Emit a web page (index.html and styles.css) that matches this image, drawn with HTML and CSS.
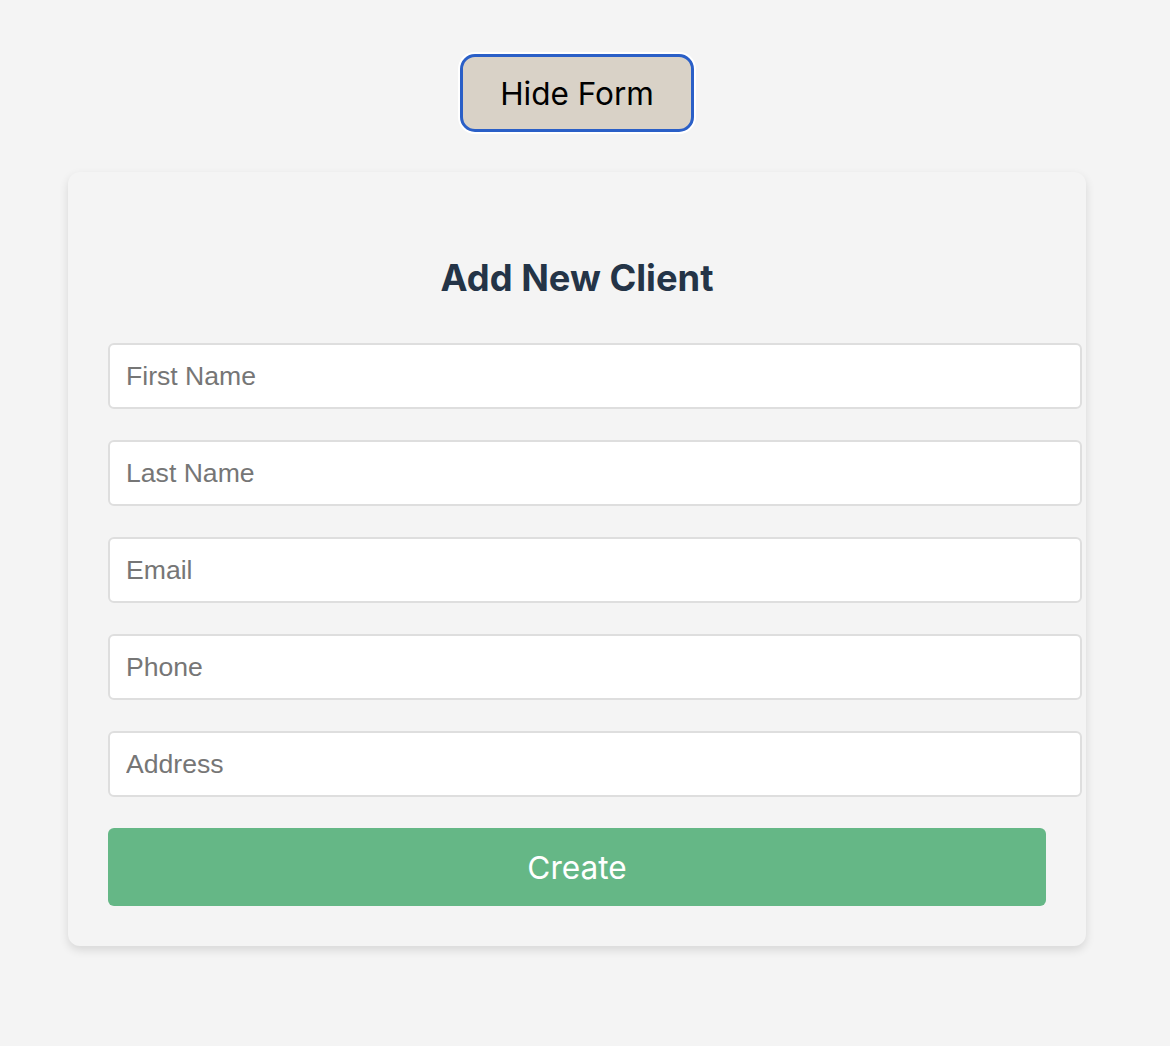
FILE: index.html
```html
<!DOCTYPE html>
<html lang="en">
<head>
<meta charset="utf-8">
<title>Add New Client</title>
<link rel="stylesheet" href="styles.css">
</head>
<body>
<div class="page">
  <button class="toggle-btn" type="button">Hide Form</button>
  <form class="card">
    <h2 class="card-title">Add New Client</h2>
    <input class="field" type="text" placeholder="First Name">
    <input class="field" type="text" placeholder="Last Name">
    <input class="field" type="email" placeholder="Email">
    <input class="field" type="tel" placeholder="Phone">
    <input class="field" type="text" placeholder="Address">
    <button class="create-btn" type="button">Create</button>
  </form>
</div>
</body>
</html>
```

FILE: styles.css
```css
html, body {
  margin: 0;
  padding: 0;
  background: #f4f4f4;
}

body {
  font-family: "Inter", "Liberation Sans", sans-serif;
}

.page {
  display: flex;
  flex-direction: column;
  align-items: center;
  padding: 54px 16px 40px 0;
}

.toggle-btn {
  box-sizing: border-box;
  width: 234px;
  height: 78px;
  background: #d9d2c7;
  border: 3px solid #2a5fc7;
  border-radius: 15px;
  box-shadow: 0 0 0 2px #ffffff;
  font-family: "Inter", "Liberation Sans", sans-serif;
  font-size: 31.5px;
  color: #000;
  padding: 0;
  cursor: pointer;
}

.card {
  box-sizing: border-box;
  width: 1018px;
  margin-top: 40px;
  padding: 40px;
  background: #f4f4f4;
  border-radius: 12px;
  box-shadow: 0 4px 10px rgba(0, 0, 0, 0.12);
  display: flex;
  flex-direction: column;
  align-items: flex-start;
  gap: 31px;
}

.card-title {
  align-self: stretch;
  text-align: center;
  margin: 45px 0 13px;
  font-size: 36.3px;
  line-height: 42px;
  font-weight: 700;
  color: #243447;
}

.field {
  box-sizing: content-box;
  width: 100%;
  height: 30px;
  padding: 16px;
  border: 2px solid #dedede;
  border-radius: 6px;
  background: #fff;
  font-family: "Liberation Sans", Arial, sans-serif;
  font-size: 26.6px;
  color: #222;
  margin: 0;
}

.field::placeholder {
  color: #767676;
}

.create-btn {
  box-sizing: border-box;
  width: 100%;
  height: 78px;
  border: none;
  border-radius: 6px;
  background: #65b786;
  color: #fff;
  font-family: "Inter", "Liberation Sans", sans-serif;
  font-size: 31.6px;
  cursor: pointer;
}
```
